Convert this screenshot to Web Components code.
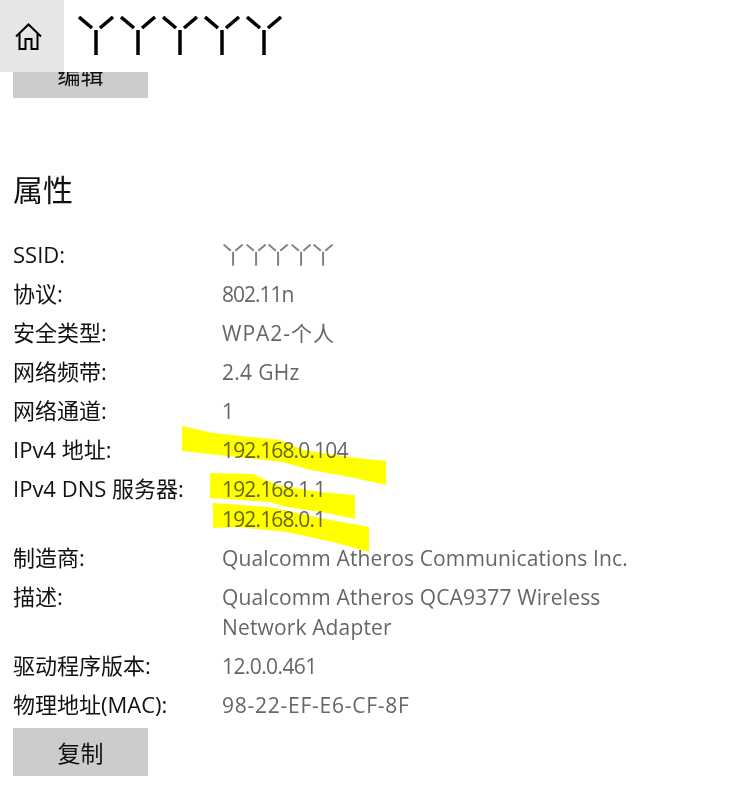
<!DOCTYPE html>
<html>
<head>
<meta charset="utf-8">
<style>
  html, body { margin: 0; background: #fff; }
  body { font-family: "Open Sans", "Noto Sans CJK SC", sans-serif; width: 753px; height: 812px; overflow: hidden; position: relative; }
</style>
</head>
<body>
<wifi-header count="5"></wifi-header>
<props-page>
  <flat-button slot="top">编辑</flat-button>
  <prop-row label="SSID:"><y-marks></y-marks></prop-row>
  <prop-row label="协议:" spacing="-1px">802.11n</prop-row>
  <prop-row label="安全类型:" spacing="1px">WPA2-个人</prop-row>
  <prop-row label="网络频带:" spacing="0.3px">2.4 GHz</prop-row>
  <prop-row label="网络通道:">1</prop-row>
  <prop-row label="IPv4 地址:" spacing="-0.85px">192.168.0.104</prop-row>
  <prop-row label="IPv4 DNS 服务器:" spacing="-0.85px">192.168.1.1<br>192.168.0.1</prop-row>
  <prop-row label="制造商:" spacing="0.14px">Qualcomm Atheros Communications Inc.</prop-row>
  <prop-row label="描述:" spacing="0.14px">Qualcomm Atheros QCA9377 Wireless<br>Network Adapter</prop-row>
  <prop-row label="驱动程序版本:" spacing="-0.6px">12.0.0.461</prop-row>
  <prop-row label="物理地址(MAC):" spacing="0.75px">98-22-EF-E6-CF-8F</prop-row>
  <flat-button slot="bottom">复制</flat-button>
</props-page>
<marker-strokes></marker-strokes>

<script>
// one redacted character, the same shape in the header and the SSID row
const yShape = `<path d="M1 1 L14 12 M35 1 L22 12 M18 14 V39" fill="none" stroke="currentColor" stroke-width="3.5"/>`;

class WifiHeader extends HTMLElement {
  connectedCallback() {
    const count = Number(this.getAttribute('count'));
    let marks = '';
    for (let i = 0; i < count; i++) {
      marks += `<svg width="38" height="40" viewBox="0 0 38 40">${yShape}</svg>`;
    }
    this.attachShadow({ mode: 'open' }).innerHTML = `
      <style>
        :host { display: flex; position: relative; z-index: 2; height: 72px; background: #fff; color: #000; }
        .home { width: 64px; height: 72px; background: #e6e6e6; box-sizing: border-box; padding: 23px 0 0 15px; }
        .title { display: flex; gap: 4px; padding: 16px 0 0 14px; align-items: flex-start; }
        svg { display: block; }
      </style>
      <div class="home">
        <svg width="27" height="27" viewBox="0 0 27 27" fill="none" stroke="#000" stroke-width="2">
          <path d="M1 13.5 L13.5 1.5 L26 13.5"/>
          <path d="M4.5 10.5 V26 H10.5 V16 H16.5 V26 H22.5 V10.5"/>
        </svg>
      </div>
      <div class="title">${marks}</div>`;
  }
}

class YMarks extends HTMLElement {
  connectedCallback() {
    let marks = '';
    for (let i = 0; i < 5; i++) {
      marks += `<svg width="21.3" height="22.4" viewBox="0 0 38 40">${yShape}</svg>`;
    }
    this.attachShadow({ mode: 'open' }).innerHTML = `
      <style>
        :host { display: flex; gap: 1.3px; height: 30px; align-items: center; margin-left: 1px; color: #808080; }
        svg { display: block; }
      </style>${marks}`;
  }
}

class FlatButton extends HTMLElement {
  connectedCallback() {
    this.attachShadow({ mode: 'open' }).innerHTML = `
      <style>
        :host { display: flex; width: 135px; height: 48px; background: #ccc; color: #111; align-items: center; justify-content: center; font-size: 23px; }
      </style>
      <slot></slot>`;
  }
}

class PropRow extends HTMLElement {
  connectedCallback() {
    const label = this.getAttribute('label');
    const spacing = this.getAttribute('spacing') || '0';
    this.attachShadow({ mode: 'open' }).innerHTML = `
      <style>
        :host { display: grid; grid-template-columns: 209px 1fr; line-height: 30px; }
        .label { color: #111; font-size: 22px; margin-top: -1px; }
        .value { color: #666; font-size: 21px; letter-spacing: ${spacing}; }
      </style>
      <div class="label">${label}</div>
      <div class="value"><slot></slot></div>`;
  }
}

class PropsPage extends HTMLElement {
  connectedCallback() {
    this.attachShadow({ mode: 'open' }).innerHTML = `
      <style>
        :host { display: block; padding: 0 13px; }
        .top { display: block; margin-top: -22px; }
        h2 { margin: 71px 0 29px; font-size: 30px; font-weight: 400; line-height: 42px; color: #111; }
        .rows { display: flex; flex-direction: column; gap: 9px; }
        .bottom { display: block; margin-top: 8px; }
      </style>
      <div class="top"><slot name="top"></slot></div>
      <h2>属性</h2>
      <div class="rows"><slot></slot></div>
      <div class="bottom"><slot name="bottom"></slot></div>`;
  }
}

// yellow highlighter scribbled over the screenshot, it sits on top of the text
class MarkerStrokes extends HTMLElement {
  connectedCallback() {
    this.attachShadow({ mode: 'open' }).innerHTML = `
      <style>
        :host { display: block; position: absolute; left: 0; top: 0; width: 753px; height: 812px; z-index: 3; mix-blend-mode: multiply; pointer-events: none; }
      </style>
      <svg width="753" height="812" fill="#ffff00">
        <path d="M182 426 L213 433 L280 440 L303 450 L347 457 L386 461 L386 485 L350 477 L310 470 L283 462 L237 457 L182 451 Z"/>
        <path d="M210 473 L253 474 L277 485 L320 492 L355 495 L355 519 L327 513 L287 507 L270 502 L210 498 Z"/>
        <path d="M213 503 L270 507 L320 518 L369 527 L369 552 L337 543 L287 532 L237 527 L213 528 Z"/>
      </svg>`;
  }
}

customElements.define('wifi-header', WifiHeader);
customElements.define('y-marks', YMarks);
customElements.define('flat-button', FlatButton);
customElements.define('prop-row', PropRow);
customElements.define('props-page', PropsPage);
customElements.define('marker-strokes', MarkerStrokes);
</script>
</body>
</html>
